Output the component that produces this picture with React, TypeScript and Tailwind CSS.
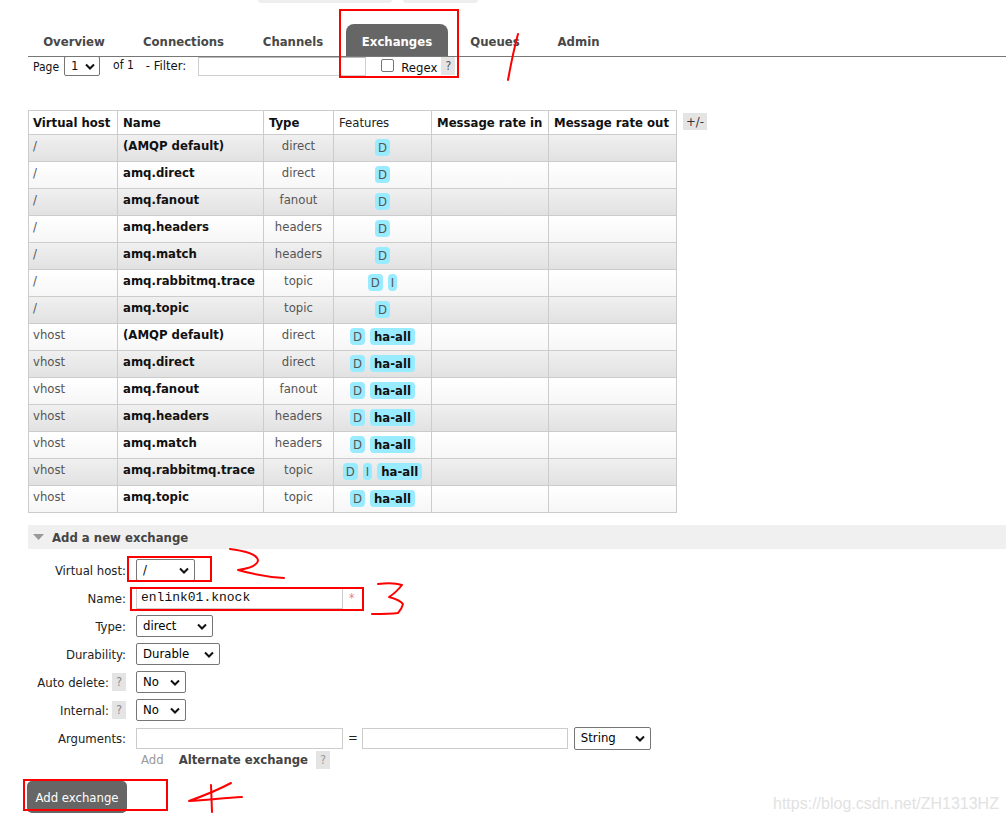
import React from "react";

const font = "font-['DejaVu_Sans_Condensed','DejaVu_Sans',sans-serif]";

type Row = [string, string, string, string[]];

const rows: Row[] = [
  ["/", "(AMQP default)", "direct", ["D"]],
  ["/", "amq.direct", "direct", ["D"]],
  ["/", "amq.fanout", "fanout", ["D"]],
  ["/", "amq.headers", "headers", ["D"]],
  ["/", "amq.match", "headers", ["D"]],
  ["/", "amq.rabbitmq.trace", "topic", ["D", "I"]],
  ["/", "amq.topic", "topic", ["D"]],
  ["vhost", "(AMQP default)", "direct", ["D", "ha-all"]],
  ["vhost", "amq.direct", "direct", ["D", "ha-all"]],
  ["vhost", "amq.fanout", "fanout", ["D", "ha-all"]],
  ["vhost", "amq.headers", "headers", ["D", "ha-all"]],
  ["vhost", "amq.match", "headers", ["D", "ha-all"]],
  ["vhost", "amq.rabbitmq.trace", "topic", ["D", "I", "ha-all"]],
  ["vhost", "amq.topic", "topic", ["D", "ha-all"]],
];

const tabs = [
  { label: "Overview", w: "w-[92px]" },
  { label: "Connections", w: "w-[113px]" },
  { label: "Channels", w: "w-[92px]" },
  { label: "Exchanges", w: "w-[102px]", active: true },
  { label: "Queues", w: "w-[80px]" },
  { label: "Admin", w: "w-[73px]" },
];

function Chevron() {
  return (
    <svg width="10" height="7" viewBox="0 0 10 7" className="shrink-0">
      <path d="M1 1.5 L5 5.5 L9 1.5" fill="none" stroke="#111" strokeWidth="2" />
    </svg>
  );
}

function Select({ value, w, h = "h-[22px]" }: { value: string; w: string; h?: string }) {
  return (
    <div
      className={`${w} ${h} flex items-center justify-between border border-[#767676] rounded-[2px] bg-white pl-[6px] pr-[5px] text-[13px] text-black`}
    >
      <span>{value}</span>
      <Chevron />
    </div>
  );
}

function Help() {
  return (
    <span className="inline-flex items-center justify-center w-[14px] h-[18px] bg-[#e4e4e4] text-[#888] text-[12px]">
      ?
    </span>
  );
}

function Badge({ t }: { t: string }) {
  const bold = t === "ha-all";
  return (
    <span
      className={`inline-block rounded-[4px] bg-[#99ebff] leading-[17px] text-[13px] ${
        bold ? "px-[4px] font-bold text-[#111]" : "px-[3px] text-[#555]"
      }`}
    >
      {t}
    </span>
  );
}

function FormRow({ label, help, children }: { label: string; help?: boolean; children: React.ReactNode }) {
  return (
    <div className="flex items-center h-[22px] mb-[6px]">
      <div className="w-[98px] flex items-center justify-end gap-[3px] text-[13px] text-[#222]">
        <span className="pt-[2px]">{label}</span>
        {help && <Help />}
      </div>
      <div className="ml-[10px] flex items-center">{children}</div>
    </div>
  );
}

export default function App() {
  return (
    <div className={`relative w-[1006px] h-[821px] overflow-hidden bg-white ${font}`}>
      {/* faint header pills cut off at the top */}
      <div className="flex h-[25px] items-start pl-[258px] gap-[11px]">
        <div className="w-[134px] h-[3px] rounded-b-[4px] bg-[#eeeeee]" />
        <div className="w-[75px] h-[3px] rounded-b-[4px] bg-[#eeeeee]" />
      </div>

      {/* tabs */}
      <div className="ml-[28px] flex items-end gap-[7px] h-[32px] border-b border-[#777]">
        {tabs.map((t) => (
          <div
            key={t.label}
            className={`${t.w} h-[32px] flex items-center justify-center pt-[4px] text-[13px] font-bold rounded-t-[8px] ${
              t.active ? "bg-[#666] text-white" : "text-[#484848]"
            }`}
          >
            {t.label}
          </div>
        ))}
      </div>

      {/* filter row */}
      <div className="ml-[33px] flex items-start h-[20px] text-[12px] text-[#111]">
        <span className="mt-[1px]">Page</span>
        <div className="ml-[5px] w-[36px] h-[20px] flex items-center justify-between border border-[#767676] rounded-[2px] pl-[6px] pr-[4px] -mt-[1px]">
          <span className="text-[13px]">1</span>
          <Chevron />
        </div>
        <span className="ml-[13px] -mt-[1px]">of 1</span>
        <span className="ml-[12px] -mt-[1px] text-[13px]">- Filter:</span>
        <div className="ml-[12px] w-[168px] h-[19px] border border-[#cfcfcf] border-t-[#bbb]" />
        <div className="ml-[15px] mt-[2px] w-[13px] h-[13px] border border-[#767676] rounded-[2px] bg-white" />
        <span className="ml-[7px] mt-[1px] text-[13px]">Regex</span>
        <span className="ml-[4px] inline-flex items-center justify-center w-[14px] h-[18px] bg-[#e4e4e4] text-[#555] text-[12px]">
          ?
        </span>
      </div>

      {/* table */}
      <div className="ml-[28px] mt-[33px] flex items-start gap-[6px]">
        <table className="border-collapse table-fixed w-[648px] text-[13px]">
          <colgroup>
            <col className="w-[89px]" />
            <col className="w-[146px]" />
            <col className="w-[70px]" />
            <col className="w-[98px]" />
            <col className="w-[117px]" />
            <col className="w-[128px]" />
          </colgroup>
          <thead>
            <tr className="h-[24px] bg-white text-left">
              <th className="border border-[#ccc] px-[4px] font-bold text-[#111]">Virtual host</th>
              <th className="border border-[#ccc] px-[5px] font-bold text-[#111]">Name</th>
              <th className="border border-[#ccc] px-[5px] font-bold text-[#111]">Type</th>
              <th className="border border-[#ccc] px-[5px] font-normal text-[#222]">Features</th>
              <th className="border border-[#ccc] px-[5px] font-bold text-[#111]">Message rate in</th>
              <th className="border border-[#ccc] px-[5px] font-bold text-[#111]">Message rate out</th>
            </tr>
          </thead>
          <tbody>
            {rows.map((r, i) => (
              <tr
                key={i}
                className={`h-[27px] ${
                  i % 2 === 0
                    ? "bg-[linear-gradient(#f0f0f0,#e1e1e1)]"
                    : "bg-[linear-gradient(#ffffff,#f6f6f6)]"
                }`}
              >
                <td className="border border-[#ccc] px-[4px] pt-[1px] align-top text-[#555]">{r[0]}</td>
                <td className="border border-[#ccc] px-[5px] pt-[1px] align-top font-bold text-[#111]">{r[1]}</td>
                <td className="border border-[#ccc] px-[4px] pt-[1px] align-top text-center text-[#555]">{r[2]}</td>
                <td className="border border-[#ccc] px-[2px] pt-[4px] align-top">
                  <div className="flex justify-center gap-[5px]">
                    {r[3].map((b) => (
                      <Badge key={b} t={b} />
                    ))}
                  </div>
                </td>
                <td className="border border-[#ccc]" />
                <td className="border border-[#ccc]" />
              </tr>
            ))}
          </tbody>
        </table>
        <span className="mt-[3px] px-[3px] h-[17px] leading-[17px] bg-[#e4e4e4] text-[13px] text-[#333]">+/-</span>
      </div>

      {/* add a new exchange */}
      <div className="ml-[28px] mt-[12px] h-[24px] bg-[#f0f0f0] flex items-center pl-[5px]">
        <svg width="11" height="7" viewBox="0 0 11 7">
          <path d="M0 0 L11 0 L5.5 6 Z" fill="#999" />
        </svg>
        <span className="ml-[8px] pt-[1px] text-[13px] font-bold text-[#444]">Add a new exchange</span>
      </div>

      <div className="ml-[28px] mt-[10px]">
        <FormRow label="Virtual host:">
          <Select value="/" w="w-[59px]" />
        </FormRow>
        <FormRow label="Name:">
          <div className="w-[207px] h-[21px] border border-[#ccc] flex items-center pl-[4px] font-['Liberation_Mono',monospace] text-[13px] text-[#111]">
            enlink01.knock
          </div>
          <span className="ml-[6px] text-[12px] text-[#f08080]">*</span>
        </FormRow>
        <FormRow label="Type:">
          <Select value="direct" w="w-[77px]" />
        </FormRow>
        <FormRow label="Durability:">
          <Select value="Durable" w="w-[84px]" />
        </FormRow>
        <FormRow label="Auto delete:" help>
          <Select value="No" w="w-[50px]" />
        </FormRow>
        <FormRow label="Internal:" help>
          <Select value="No" w="w-[50px]" />
        </FormRow>
        <FormRow label="Arguments:">
          <div className="w-[207px] h-[21px] border border-[#ccc]" />
          <span className="ml-[5px] text-[13px] text-[#222]">=</span>
          <div className="ml-[4px] w-[206px] h-[21px] border border-[#ccc]" />
          <div className="ml-[6px]">
            <Select value="String" w="w-[77px]" h="h-[23px]" />
          </div>
        </FormRow>
        <div className="flex items-center h-[18px] ml-[113px] -mt-[4px]">
          <span className="text-[13px] text-[#999]">Add</span>
          <span className="ml-[15px] text-[13px] font-bold text-[#444]">Alternate exchange</span>
          <span className="ml-[8px] inline-flex items-center justify-center w-[14px] h-[18px] bg-[#e4e4e4] text-[#999] text-[12px]">
            ?
          </span>
        </div>
        <button className="mt-[12px] -ml-[1px] w-[100px] h-[32px] rounded-[5px] bg-[#666] text-white text-[13px] flex items-center justify-center pt-[2px]">
          Add exchange
        </button>
      </div>

      {/* watermark */}
      <span className="absolute left-[773px] top-[792px] font-['Liberation_Sans',sans-serif] text-[16px] text-[#e2e2e2]">
        https://blog.csdn.net/ZH1313HZ
      </span>

      {/* red hand annotations */}
      <svg className="absolute inset-0 pointer-events-none" width="1006" height="821">
        <g fill="none" stroke="#ff0000" strokeWidth="2">
          <rect x="340" y="10" width="118" height="67" />
          <rect x="128" y="557" width="83" height="24" />
          <rect x="131" y="588" width="232" height="22" />
          <rect x="24" y="780" width="143" height="30" />
        </g>
        <g fill="none" stroke="#ff0000" strokeWidth="2" strokeLinecap="round" strokeLinejoin="round">
          <path d="M518 34 C515 45 512 58 508 80" />
          <path d="M230 549 C245 551 258 554 258 561 C256 567 246 569 238 570 C252 574 268 577 284 578" />
          <path d="M378 584 C386 583 396 583 402 585 C398 590 394 594 389 597 C396 599 401 601 403 604 C402 608 400 611 398 613 C390 614 380 614 372 614" />
          <path d="M231 783 C218 790 203 796 189 801 C207 800 224 798 242 797" />
          <path d="M211 785 L212 812" />
        </g>
      </svg>
    </div>
  );
}
